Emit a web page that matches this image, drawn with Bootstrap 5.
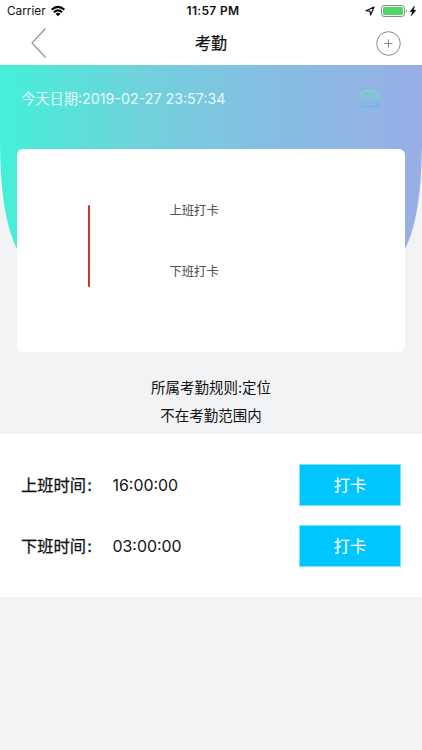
<!DOCTYPE html>
<html lang="zh-CN">
<head>
<meta charset="utf-8">
<meta name="viewport" content="width=device-width, initial-scale=1">
<title>考勤</title>
<link href="https://cdn.jsdelivr.net/npm/bootstrap@5.3.0/dist/css/bootstrap.min.css" rel="stylesheet">
<style>
body{font-family:Inter,"Noto Sans CJK SC",sans-serif;background:#f1f3f5;color:#111;line-height:1.25;overflow:hidden}
svg{display:block;flex:none}
.status-bar{height:22px;font-size:11.8px;display:grid;grid-template-columns:1fr auto 1fr;padding:0 5px 0 7px}
.clock{font-weight:600;font-size:12px;letter-spacing:.35px;padding:0 0 1px 2px}
.title-bar{height:43px;display:grid;grid-template-columns:1fr auto 1fr;padding:0 20px 0 30px}
.page-title{font-size:16px;font-weight:400;-webkit-text-stroke:.25px #111;padding-right:10px}
.hero{height:304px}
.backdrop{z-index:0}
.date-row{height:84px;padding:0 42px 16px 21px;font-size:14.25px;color:#e6fbfd}
.record-card{height:203px;margin:0 17px;border-radius:6px;padding-top:57px}
.timeline{width:2px;height:82px;background:#cf3524;margin:-1px 0 0 70.5px;border-radius:1px}
.steps{margin-left:80px;font-size:12.3px;color:#555;-webkit-text-stroke:.1px #555;gap:46px;line-height:15px;margin-top:-3px}
.rules{height:65px;font-size:14.5px;line-height:27.5px;padding-top:5px}
.punch-panel{height:163px;padding:30px 21px 0;gap:19px}
.punch-row{height:42px}
.punch-label{width:91.5px;font-size:16.3px;-webkit-text-stroke:.25px #111}
.punch-label i{font-style:normal;padding-left:1px}
.punch-time{font-size:15.9px;padding-top:1px}
.punch-btn{width:102px;height:42px;background:#00c6ff;border:1px solid #7fe3fb;font-size:16.3px;-webkit-text-stroke:.1px #fff}
</style>
<script src="https://cdn.jsdelivr.net/npm/bootstrap@5.3.0/dist/js/bootstrap.bundle.min.js"></script>
</head>
<body>
<header class="bg-white">
  <div class="status-bar align-items-center">
    <div class="d-flex align-items-center"><span>Carrier</span>
      <svg class="ms-1" width="16" height="12" viewBox="0 0 16 12" fill="none" stroke="#000" stroke-width="2"><path d="M1.6 4.7Q8-.9 14.4 4.7M3.9 7.2Q8 3.6 12.1 7.2"/><path d="M5.5 8.8Q8 6.9 10.5 8.8L8 11.3Z" fill="#000" stroke="none"/></svg>
    </div>
    <span class="clock">11:57 PM</span>
    <div class="d-flex align-items-center justify-content-end">
      <svg width="10" height="10" viewBox="0 0 10 10" fill="none" stroke="#111" stroke-width="1.2" stroke-linejoin="round"><path d="M9 1 1 4.7 4.9 5.2 5.6 9Z"/></svg>
      <svg class="ms-1" width="38" height="12" viewBox="0 0 38 12"><rect x="2.5" y=".5" width="23" height="11" rx="2.7" fill="#fff" stroke="#888"/><rect x="4" y="2" width="20" height="8" rx="1.2" fill="#4cd964"/><path d="M27 4q2 2 0 4Z" fill="#888"/><path d="M35.5 1 31 6.7h2.5L32 11l5-5.8h-2.6Z" fill="#000" stroke="#000" stroke-width=".4"/></svg>
    </div>
  </div>
  <div class="title-bar align-items-center">
    <svg width="17" height="32" viewBox="0 0 17 32" fill="none" stroke="#999" stroke-width="1.3"><path d="M15.5 .5 2 15l13.5 14.5"/></svg>
    <h1 class="page-title m-0">考勤</h1>
    <svg class="ms-auto" width="26" height="26" viewBox="0 0 26 26" fill="none" stroke="#888"><circle cx="12.5" cy="12.5" r="11.8"/><path d="M8.5 12.5h8M12.5 8.5v8"/></svg>
  </div>
</header>
<main>
  <section class="hero position-relative">
    <svg class="backdrop position-absolute top-0 start-0" width="422" height="240" viewBox="0 0 422 240">
      <defs><linearGradient id="sea"><stop offset="0" stop-color="#43f0d7"/><stop offset=".33" stop-color="#70d2dc"/><stop offset=".6" stop-color="#83c0e2"/><stop offset="1" stop-color="#99aee6"/></linearGradient></defs>
      <path fill="url(#sea)" d="M0 0H422V72C422 128 416 161 405.5 183L360 240H62L16.5 183C6 161 0 128 0 72Z"/>
    </svg>
    <div class="date-row position-relative d-flex align-items-center justify-content-between">
      <span>今天日期:2019-02-27 23:57:34</span>
      <svg width="20" height="20" viewBox="0 0 20 20" fill="none" stroke="url(#leaf)" stroke-width="1.6"><defs><linearGradient id="leaf" gradientUnits="userSpaceOnUse" x1="0" y1="0" x2="0" y2="19"><stop stop-color="#7be3ad"/><stop offset=".5" stop-color="#6fcfd8"/><stop offset="1" stop-color="#4fbdf6"/></linearGradient></defs><path d="M3 2.5Q1.5 2.5 1.5 4v12Q1.5 17.5 3 17.5h13.5q1.5 0 1.5-1.5V4Q18 2.5 16.5 2.5M2 7h16M5.5 .5v3.5M8.5 .5v3.5M11.5 .5v3.5M14.5 .5v3.5"/><path d="M7 10h5l-2 4.2" stroke-width="1.2"/></svg>
    </div>
    <div class="record-card position-relative bg-white d-flex align-items-start">
      <div class="timeline"></div>
      <div class="steps d-flex flex-column"><span>上班打卡</span><span>下班打卡</span></div>
    </div>
  </section>
  <section class="rules text-center"><div>所属考勤规则:定位</div><div>不在考勤范围内</div></section>
  <section class="punch-panel bg-white d-flex flex-column">
    <div class="punch-row d-flex align-items-center">
      <span class="punch-label">上班时间<i>:</i></span><span class="punch-time">16:00:00</span>
      <button class="punch-btn btn rounded-0 p-0 text-white ms-auto" type="button">打卡</button>
    </div>
    <div class="punch-row d-flex align-items-center">
      <span class="punch-label">下班时间<i>:</i></span><span class="punch-time">03:00:00</span>
      <button class="punch-btn btn rounded-0 p-0 text-white ms-auto" type="button">打卡</button>
    </div>
  </section>
</main>
</body>
</html>
